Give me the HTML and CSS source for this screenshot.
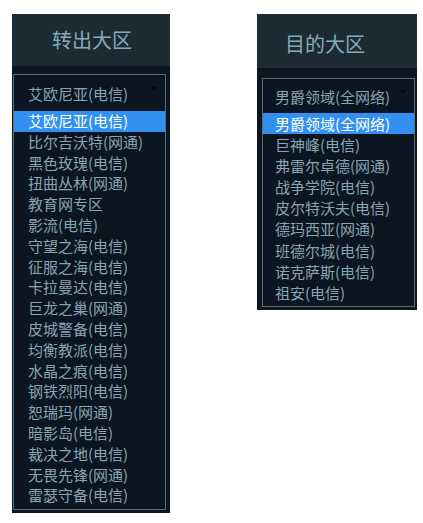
FILE: index.html
```html
<!DOCTYPE html>
<html lang="zh-CN">
<head>
<meta charset="utf-8">
<link rel="stylesheet" href="styles.css">
</head>
<body>
<div class="page">
  <div class="panel panel-left">
    <div class="head head-left"><span class="title">转出大区</span></div>
    <div class="body">
      <div class="frame">
        <div class="select"><span>艾欧尼亚(电信)</span><span class="arrow"></span></div>
        <ul class="list">
          <li class="sel">艾欧尼亚(电信)</li>
          <li>比尔吉沃特(网通)</li>
          <li>黑色玫瑰(电信)</li>
          <li>扭曲丛林(网通)</li>
          <li>教育网专区</li>
          <li>影流(电信)</li>
          <li>守望之海(电信)</li>
          <li>征服之海(电信)</li>
          <li>卡拉曼达(电信)</li>
          <li>巨龙之巢(网通)</li>
          <li>皮城警备(电信)</li>
          <li>均衡教派(电信)</li>
          <li>水晶之痕(电信)</li>
          <li>钢铁烈阳(电信)</li>
          <li>恕瑞玛(网通)</li>
          <li>暗影岛(电信)</li>
          <li>裁决之地(电信)</li>
          <li>无畏先锋(网通)</li>
          <li>雷瑟守备(电信)</li>
        </ul>
      </div>
    </div>
  </div>
  <div class="panel panel-right">
    <div class="head head-right"><span class="title">目的大区</span></div>
    <div class="body">
      <div class="frame">
        <div class="select"><span>男爵领域(全网络)</span><span class="arrow"></span></div>
        <ul class="list">
          <li class="sel">男爵领域(全网络)</li>
          <li>巨神峰(电信)</li>
          <li>弗雷尔卓德(网通)</li>
          <li>战争学院(电信)</li>
          <li>皮尔特沃夫(电信)</li>
          <li>德玛西亚(网通)</li>
          <li>班德尔城(电信)</li>
          <li>诺克萨斯(电信)</li>
          <li>祖安(电信)</li>
        </ul>
      </div>
    </div>
  </div>
</div>
</body>
</html>
```
FILE: styles.css
```css
html, body {
  margin: 0;
  padding: 0;
  background: #ffffff;
}
body {
  font-family: "Noto Sans CJK SC", "Noto Sans", sans-serif;
}
.page {
  display: flex;
  align-items: flex-start;
  padding: 14px 0 0 12px;
}
.panel {
  display: flex;
  flex-direction: column;
  background: #0b1622;
}
.panel-left {
  width: 158px;
}
.panel-right {
  width: 160px;
  margin-left: 87px;
}
.head {
  background: #1c2a34;
  display: flex;
  align-items: center;
}
.head-left {
  height: 52px;
  padding-left: 40px;
}
.head-right {
  height: 54px;
  padding-left: 28px;
  padding-top: 6px;
  box-sizing: border-box;
}
.title {
  color: #87aabb;
  font-size: 20px;
  line-height: 24px;
}
.body {
  padding: 8px 4px 3px 1px;
}
.panel-right .body {
  padding: 10px 2px 3px 5px;
}
.frame {
  border: 1px solid #5c6d78;
}
.select {
  height: 36px;
  display: flex;
  align-items: center;
  justify-content: space-between;
  padding: 0 8px 0 14px;
  color: #8aa3b3;
  font-size: 15px;
}
.panel-right .select {
  height: 34px;
  padding-left: 12px;
}
.arrow {
  width: 0;
  height: 0;
  border-left: 3px solid transparent;
  border-right: 3px solid transparent;
  border-top: 4px solid #03080d;
  margin-top: -8px;
}
.list {
  list-style: none;
  margin: 0;
  padding: 0 0 3px 0;
}
.list li {
  height: 20.8px;
  line-height: 20.8px;
  font-size: 15px;
  color: #8aa3b3;
  padding-left: 14px;
  white-space: nowrap;
}
.panel-right .list li {
  height: 21.1px;
  line-height: 21.1px;
  padding-left: 12px;
}
.list li.sel {
  background: #3190f0;
  color: #ffffff;
}
```
